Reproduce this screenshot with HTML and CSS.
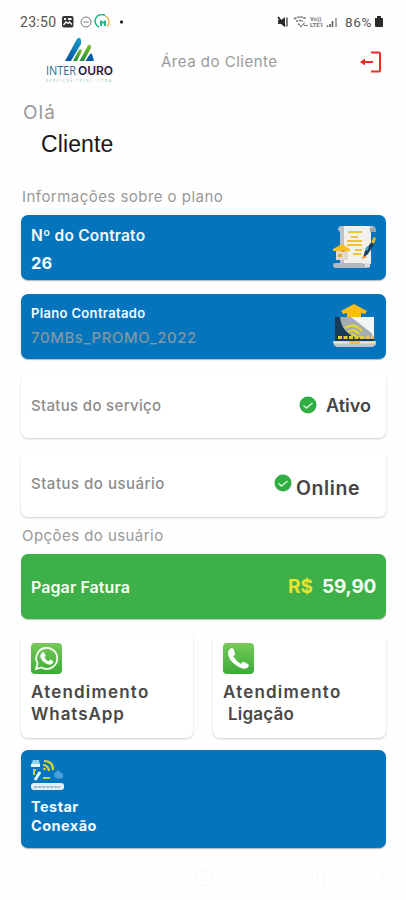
FILE: index.html
```html
<!DOCTYPE html>
<html lang="pt-BR">
<head>
<meta charset="utf-8">
<title>Área do Cliente</title>
<link rel="stylesheet" href="styles.css">
</head>
<body>
<div class="statusbar">
  <span class="time">23:50</span>
  <svg class="notifs" width="64" height="16" viewBox="0 0 64 16">
    <rect x="1" y="2" width="11.500" height="11.500" rx="2" fill="#333"/><path d="M2.500 11L5 8l2 1.500 1.500-1.500 2.500 2.500" fill="none" stroke="#fff" stroke-width="1.300"/><rect x="3" y="4" width="2" height="2" fill="#fff"/><rect x="7" y="4" width="3.500" height="2" fill="#fff"/>
    <circle cx="25" cy="8" r="5" fill="none" stroke="#777"/><path d="M22.500 8h5" stroke="#999" stroke-width="1.300"/>
    <path d="M38 13a6.500 6.500 0 1 1 6-11.500" fill="none" stroke="#20b48c" stroke-width="1.500"/><path d="M44.500 2a6.500 6.500 0 0 1 1.500 10.500" fill="none" stroke="#edbd62" stroke-width="1.500"/><path d="M40 12V6.500M44 12V6.500M40 8.500h4" stroke="#20b48c" stroke-width="2"/>
    <rect x="59" y="6.500" width="3" height="3" rx="1" fill="#222"/>
  </svg>
  <svg class="signals" width="64" height="16" viewBox="0 0 64 16">
    <path d="M1 6h3l4-3v10L4 10H1z" fill="#333"/><path d="M1 3l7 9" stroke="#222" stroke-width="1.800"/><path d="M10 3.500v9" stroke="#555" stroke-width="1.500"/>
    <path d="M17 5q7-4 12 0M19 7.500q4-2 7 0M21 9.500l3 3 4-4" fill="none" stroke="#777" stroke-width="1.500" stroke-dasharray="2.500 .7"/><path d="M27 11.500h4" stroke="#777"/>
    <text x="33" y="7" class="tiny">Vo))</text><text x="33" y="13" class="tiny">LTE1</text>
    <path d="M50.500 13v-1.500M53 13v-3M55.500 13V7" stroke="#555" stroke-width="1.500"/><path d="M59 13V4" stroke="#888" stroke-width="1.500"/>
  </svg>
  <span class="pct">86%</span>
  <svg class="battery" width="8" height="11" viewBox="0 0 8 11"><path d="M0 2h2V0h4v2h2v8q0 1-1 1H1q-1 0-1-1z" fill="#2b2b2b"/></svg>
</div>

<header class="header">
  <svg class="logo" width="70" height="48" viewBox="0 0 70 48">
    <defs><linearGradient id="lb" x1="0" y1="1" x2="1" y2="0"><stop offset="0" stop-color="#084ba0"/><stop offset="1" stop-color="#15a0cd"/></linearGradient><linearGradient id="lg" x1="0" y1="1" x2="1" y2="0"><stop offset="0" stop-color="#168640"/><stop offset="1" stop-color="#85bd26"/></linearGradient></defs>
    <path d="M19 25L31 3Q34 0 35 4v4L25 25z" fill="url(#lb)"/>
    <path d="M27 25l6-11q2-2 3 1l-5 10z" fill="url(#lg)"/>
    <path d="M33.500 25L42 9.500Q45 7 45 12l-7 13z" fill="url(#lg)"/>
    <path d="M39.500 25l4.500-7q1-1 2 0l2 7z" fill="#075aa8"/>
    <text x="0" y="38.500" class="logo-inter" textLength="30" lengthAdjust="spacingAndGlyphs">INTER</text>
    <text x="32" y="38.500" class="logo-ouro" textLength="35" lengthAdjust="spacingAndGlyphs">OURO</text>
    <text x="0" y="45.500" class="logo-sub" textLength="65">SERVIÇOS TELEC. LTDA</text>
  </svg>
  <h1 class="title">Área do Cliente</h1>
  <svg class="exit" width="22" height="22" viewBox="0 0 22 22" fill="none" stroke="#ee2a24" stroke-width="2"><path d="M11 1.500h8q1 0 1 1v17q0 1-1 1h-8"/><path d="M2 11h11"/><path d="M0 11l5-3.500v7z" fill="#ee2a24" stroke="none"/></svg>
</header>

<main class="main">
  <p class="hello">Olá</p>
  <p class="name">Cliente</p>

  <h2 class="section section-plan">Informações sobre o plano</h2>
  <section class="card blue contract">
    <div><p class="contract-label">Nº do Contrato</p><p class="contract-value">26</p></div>
    <svg width="44" height="46" viewBox="0 0 44 46">
      <path d="M5 5q0-4 4-4h31q3 1 3 6H14v32H7V7z" fill="#bfc3c7"/><path d="M11 1h24q3 0 3 5v33H11z" fill="#f1f0eb"/><path d="M37 3q6-2 6 4h-6z" fill="#9fa6ac"/>
      <path d="M15 7h14M18 12h7M14 16h15M14 20h15M22 25h7M20 29h8" stroke="#edc338" stroke-width="1.800"/>
      <path d="M0 24l9-5 8 5v2H0z" fill="#f6bd1c"/><path d="M3 26h12v9H3z" fill="#dfd9cf"/><path d="M5 29h4v3H5zM8 25h4v2H8z" fill="#e3a830"/>
      <path d="M30 33l2-7 7-10 3 2-7 11z" fill="#163f65"/><path d="M38 17l3-5 2 1-2 6z" fill="#e8bc30"/><path d="M32 24l2-3 2 1-2 4z" fill="#43a6ca"/><path d="M30 30l4 2-5 2z" fill="#ef902a"/>
      <path d="M0 40q0-2 3-2h27q0 3 4 1h2v4H3q-3 0-3-3z" fill="#b5b9bd"/><path d="M31 38h6v4h-5z" fill="#d8dadb"/>
    </svg>
  </section>
  <section class="card blue plan">
    <div><p class="plan-label">Plano Contratado</p><p class="plan-value">70MBs_PROMO_2022</p></div>
    <svg width="44" height="46" viewBox="0 0 44 46">
      <path d="M2 13h39v26H2z" fill="#173a59"/><path d="M14 13h27v20z" fill="#f3f4f4"/><path d="M7 13h11q20 5 22 22Q9 36 7 13z" fill="#a4acb0"/><path d="M18 13h23v18z" fill="#f3f4f4"/>
      <path d="M21 0l13 7-2 3-4-1v4H14V9l-4 1-2-3z" fill="#fbbc16"/>
      <path d="M12 24q9-6 17 3M15 28q6-4 11 2M18 31q3-1 5 2" fill="none" stroke="#e7d62e" stroke-width="2.200"/>
      <path d="M5 33.500h36" stroke="#ecc934" stroke-width="2.800" stroke-dasharray="4 1.500"/><path d="M0 37h43q1 5-4 6H4q-4-1-4-6z" fill="#bfc5c9"/><path d="M1 38.500h41" stroke="#e4e7e9" stroke-width="2"/><path d="M16 37h11v3H16z" fill="#eec33a"/>
    </svg>
  </section>

  <section class="card white service"><span class="status-label service-label">Status do serviço</span>
    <svg class="check" width="18" height="18" viewBox="0 0 18 18"><circle cx="9" cy="9" r="8.500" fill="#30ad43"/><path d="M4.500 9.500l3 2.500L13.500 7" fill="none" stroke="#d9f4d8" stroke-width="1.500"/></svg><strong class="active">Ativo</strong></section>
  <section class="card white user"><span class="status-label user-label">Status do usuário</span>
    <svg class="check" width="18" height="18" viewBox="0 0 18 18"><circle cx="9" cy="9" r="8.500" fill="#30ad43"/><path d="M4.500 9.500l3 2.500L13.500 7" fill="none" stroke="#d9f4d8" stroke-width="1.500"/></svg><strong class="online">Online</strong></section>

  <h2 class="section section-options">Opções do usuário</h2>
  <section class="card green"><span class="pay">Pagar Fatura</span><strong class="currency">R$</strong><strong class="amount">59,90</strong></section>

  <div class="support">
    <section class="white tile">
      <svg width="31" height="31" viewBox="0 0 31 31"><defs><linearGradient id="gg" x1="0" y1="0" x2="0" y2="1"><stop offset="0" stop-color="#76c957"/><stop offset="1" stop-color="#3cab39"/></linearGradient></defs><rect width="31" height="31" rx="4" fill="url(#gg)"/><path d="M5 26l1.600-5.500a10.500 10.500 0 1 1 4 4z" fill="none" stroke="#f5fff1" stroke-width="1.800"/><path d="M10.500 10.500q1.500-2.500 3-.500l1.200 2.700-1.200 1.800q1.400 2.600 4 3.700l1.500-1.600 3 1.500q1 1-.800 2.700-2.500 2-6.700-.600-4-2.500-5.200-6-.500-2.500 1.200-3.700z" fill="#fff"/></svg>
      <p class="tile-text"><span class="tw">Atendimento</span><br><span class="wa">WhatsApp</span></p>
    </section>
    <section class="white tile tile-call">
      <svg width="31" height="31" viewBox="0 0 31 31"><rect width="31" height="31" rx="4" fill="url(#gg)"/><path d="M6 7q3-4 5 0l1 4q0 2-2 2 3 5 8 8 1-3 3-2l4 2q2 2-1 4-4 2-10-2Q5 17 5 10q0-2 1-3z" fill="#fff"/></svg>
      <p class="tile-text"><span class="tw">Atendimento</span><br><span class="call">Ligação</span></p>
    </section>
  </div>

  <section class="blue test">
    <svg width="33" height="32" viewBox="0 0 33 32">
      <path d="M2 1h6l1 5H0z" fill="#8ed3ed"/><path d="M0 5h9v3H0z" fill="#e4f3f8"/>
      <path d="M13 2q9 0 9 9M12 6q5 0 6 6" fill="none" stroke="#d9d72d" stroke-width="2.200"/><circle cx="13.500" cy="10" r="1.300" fill="#d9d72d"/>
      <path d="M3 10v6M2 11h3M12 19h7" fill="none" stroke="#c6d53a" stroke-width="2"/><path d="M4 21l5-8" stroke="#e5f4f7" stroke-width="3"/><path d="M27 11l2 2 3 2v4l-4 1-4-1-1-4z" fill="#4a9fda"/>
      <rect x="0" y="24" width="33" height="7" rx="3" fill="#e4edf1"/><path d="M3 28h26" stroke="#9cbdd0" stroke-width="1.800" stroke-dasharray="3 1"/>
    </svg>
    <p class="test-text"><span class="testar">Testar</span><br><span class="conexao">Conexão</span></p>
  </section>
</main>
<nav class="nav"><svg width="406" height="42" viewBox="0 0 406 42" fill="none" stroke="#fafafa" stroke-width="2"><path d="M95 13l-6 7 6 7"/><rect x="197" y="13" width="15" height="14" rx="4"/><path d="M312 13v14M318 13v14M324 13v14M380 13l6 5-6 5M380 24h8"/></svg></nav>
</body>
</html>
```
FILE: styles.css
```css
* { box-sizing: border-box; }
body { margin: 0; width: 406px; height: 900px; overflow: hidden; background: #fefefe; font-family: Inter, "Open Sans", sans-serif; }
p, h1, h2 { margin: 0; white-space: nowrap; }
svg { display: block; flex: none; }
span, strong { white-space: nowrap; }

.statusbar { display: flex; align-items: center; height: 30px; padding: 13px 22px 0 20px; font: 14px/18px Roboto, sans-serif; color: #555; }
.time { width: 41px; letter-spacing: .3px; }
.signals { margin-left: 152px; }
.pct { margin-left: 4px; width: 30px; font-size: 13.5px; letter-spacing: .7px; }
.tiny { font: bold 6px Roboto, sans-serif; fill: #777; }

.header { display: flex; height: 64px; padding: 6px 24px 0 46px; }
.logo-inter { font: 12px "Open Sans", sans-serif; fill: #27708f; }
.logo-ouro { font: 600 12px Inter, sans-serif; fill: #1c2042; }
.logo-sub { font: 3.5px "Open Sans", sans-serif; fill: #86b9c9; }
.title { margin: 16px 0 0 45px; width: 199px; font-size: 15px; line-height: 20px; font-weight: 400; letter-spacing: .5px; color: #9b9b9b; }
.exit { margin-top: 15px; }

.main { padding: 0 20px 0 21px; }
.hello { padding: 7px 0 0 2px; font-size: 19px; line-height: 24px; letter-spacing: 1px; color: #999; }
.name { padding: 6px 0 0 20px; font: 23px/26px "Liberation Sans", sans-serif; letter-spacing: .1px; color: #161616; }
.section { padding-left: 1px; font-size: 15px; line-height: 20px; font-weight: 400; color: #999; }
.section-plan { margin: 30px 0 8px; letter-spacing: .46px; }
.section-options { margin: 9px 0 8px; letter-spacing: .44px; }

.card { display: flex; height: 65px; border-radius: 7px; margin-bottom: 14px; padding-left: 10px; }
.blue { background: #0475bd; color: #f4faff; box-shadow: 0 1px 1px #a9bac5; }
.contract, .plan { justify-content: space-between; padding: 10px 9px 0 10px; }
.contract-label { padding-top: 1px; font-size: 15.5px; line-height: 20px; font-weight: 600; letter-spacing: .2px; }
.contract-value { margin-top: 7px; font-size: 16.5px; line-height: 20px; font-weight: 700; }
.plan-label { font-size: 13px; line-height: 18px; font-weight: 600; letter-spacing: .34px; }
.plan-value { margin-top: 6px; font-size: 15px; line-height: 20px; font-weight: 500; color: #8097a4; letter-spacing: .56px; }

.white { background: #fff; box-shadow: 0 1px 2px #ccc; border-radius: 7px; clip-path: inset(2px -4px -4px -4px); }
.service { margin-bottom: 13px; padding-top: 22px; }
.user { height: 66px; margin-bottom: 0; padding-top: 22px; }
.status-label { font-size: 15px; line-height: 22px; font-weight: 500; color: #8c8c8c; letter-spacing: .5px; }
.service-label { width: 268px; letter-spacing: .32px; }
.user-label { width: 243px; }
.service .check { margin-top: 1px; }
.user .check { margin-top: 1px; }
.active { margin-left: 9px; font-size: 18px; line-height: 22px; font-weight: 600; color: #444; }
.online { margin: 4px 0 0 4px; font-size: 19.5px; line-height: 22px; font-weight: 600; letter-spacing: .6px; color: #444; }

.green { align-items: center; background: #3eb049; box-shadow: 0 1px 1px #b8c4b8; color: #f6fff4; }
.pay { width: 257px; font-size: 16px; font-weight: 600; letter-spacing: .08px; }
.currency { width: 34px; font-size: 19px; color: #e7e42d; }
.amount { font-size: 19px; letter-spacing: -.2px; }

.support { display: flex; gap: 20px; height: 105px; margin-bottom: 12px; }
.tile { width: 172px; padding: 10px 0 0 10px; }
.tile-text { margin-top: 7px; font-size: 17px; line-height: 22px; font-weight: 600; color: #484848; }
.tw { letter-spacing: 1.2px; }
.wa { letter-spacing: .95px; }
.call { margin-left: 5px; letter-spacing: .2px; }
.tile-call { width: 173px; }

.test { height: 98px; border-radius: 7px; padding: 9px 10px; }
.test-text { margin-top: 6px; font-size: 14.5px; line-height: 19px; font-weight: 700; letter-spacing: .45px; }
.nav { height: 42px; margin-top: 10px; }
```
